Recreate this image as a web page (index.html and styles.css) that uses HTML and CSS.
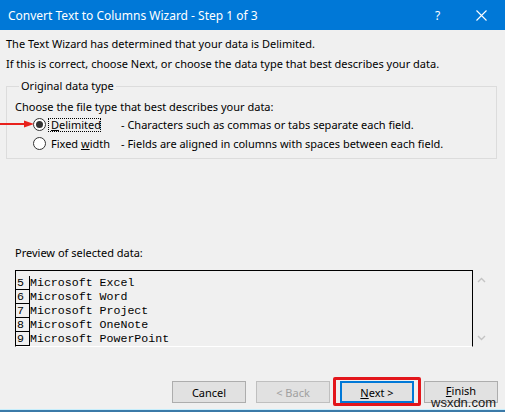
FILE: index.html
```html
<!doctype html>
<html lang="en">
<head>
  <meta charset="utf-8">
  <title>Convert Text to Columns Wizard - Step 1 of 3</title>
  <link rel="stylesheet" href="styles.css">
</head>
<body>
  <div class="window">
    <div class="titlebar">
      <span class="title">Convert Text to Columns Wizard - Step 1 of 3</span>
      <span class="help">?</span>
      <span class="close">
        <svg width="11" height="11" viewBox="0 0 11 11"><path d="M0.5 0.5 L10.5 10.5 M10.5 0.5 L0.5 10.5" stroke="#fff" stroke-width="1.1" fill="none"/></svg>
      </span>
    </div>

    <div class="content">
      <p class="intro">The Text Wizard has determined that your data is Delimited.</p>
      <p class="intro">If this is correct, choose Next, or choose the data type that best describes your data.</p>

      <fieldset class="group">
        <legend>Original data type</legend>
        <p class="hint">Choose the file type that best describes your data:</p>
        <div class="option">
          <svg class="pointer" width="34" height="8" viewBox="0 0 34 8"><path d="M0 4 H26" stroke="#e8211c" stroke-width="2"/><path d="M24 0.5 L34 4 L24 7.5 Z" fill="#e8211c"/></svg>
          <span class="radio checked"></span>
          <span class="label focused"><u>D</u>elimited</span>
          <span class="desc">- Characters such as commas or tabs separate each field.</span>
        </div>
        <div class="option">
          <span class="radio"></span>
          <span class="label">Fixed <u>w</u>idth</span>
          <span class="desc">- Fields are aligned in columns with spaces between each field.</span>
        </div>
      </fieldset>

      <p class="preview-title">Preview of selected data:</p>
      <div class="preview-wrap">
        <div class="preview">
          <div class="row"><span class="num">5</span><span class="cell">Microsoft Excel</span></div>
          <div class="row"><span class="num">6</span><span class="cell">Microsoft Word</span></div>
          <div class="row"><span class="num">7</span><span class="cell">Microsoft Project</span></div>
          <div class="row"><span class="num">8</span><span class="cell">Microsoft OneNote</span></div>
          <div class="row"><span class="num">9</span><span class="cell">Microsoft PowerPoint</span></div>
        </div>
        <div class="scroll">
          <svg width="9" height="6" viewBox="0 0 9 6"><path d="M1 5 L4.5 1.5 L8 5" stroke="#c4c4c4" stroke-width="1.4" fill="none"/></svg>
          <svg width="9" height="6" viewBox="0 0 9 6"><path d="M1 1 L4.5 4.5 L8 1" stroke="#c4c4c4" stroke-width="1.4" fill="none"/></svg>
        </div>
      </div>
    </div>

    <div class="buttons">
      <button class="btn">Cancel</button>
      <button class="btn" disabled>&lt; Back</button>
      <button class="btn default marked"><u>N</u>ext &gt;</button>
      <button class="btn finish"><span class="finish-label"><u>F</u>inish</span><span class="stamp">wsxdn.com</span></button>
    </div>
    <div class="frame-edge"></div>
  </div>
</body>
</html>
```

FILE: styles.css
```css
* {
  margin: 0;
  padding: 0;
  box-sizing: border-box;
}

body {
  font-family: "Noto Sans", "Open Sans", sans-serif;
  font-size: 11px;
  color: #000;
  background: #f0f0f0;
}

.window {
  width: 505px;
  height: 412px;
  display: flex;
  flex-direction: column;
  background: #f0f0f0;
}

/* title bar */
.titlebar {
  height: 30px;
  background: #0078d7;
  color: #fff;
  display: flex;
  align-items: center;
  padding-left: 8px;
  font-size: 12px;
}

.title {
  flex: 1;
}

.help {
  width: 10px;
  margin-right: 31px;
  font-size: 12px;
}

.close {
  display: flex;
  margin-right: 18px;
}

/* body */
.content {
  padding: 4px 0 0 6px;
  flex: 1;
}

.intro {
  line-height: 20px;
}

.group {
  margin: 4px 8px 0 0;
  border: 1px solid #dcdcdc;
  padding: 5px 8px 5px 8px;
}

.group legend {
  padding: 0 2px;
  margin-left: 4px;
  line-height: 16px;
}

.hint {
  line-height: 16px;
}

.option {
  position: relative;
  display: flex;
  align-items: center;
  height: 19px;
}

.pointer {
  position: absolute;
  left: -15px;
  top: 5px;
}

.radio {
  width: 13px;
  height: 13px;
  border: 1px solid #333;
  border-radius: 50%;
  background: #fff;
  margin-left: 18px;
  display: flex;
  align-items: center;
  justify-content: center;
}

.radio.checked::after {
  content: "";
  width: 7px;
  height: 7px;
  border-radius: 50%;
  background: #333;
}

.label {
  width: 73px;
  margin-left: 2px;
  padding-left: 2px;
  line-height: 12px;
  border: 1px solid transparent;
}

.label.focused {
  width: 53px;
  margin-right: 20px;
  border: 1px dotted #000;
}

.preview-title {
  margin-top: 86px;
  margin-left: 9px;
  line-height: 16px;
}

.preview-wrap {
  display: flex;
  margin: 9px 0 0 9px;
}

.preview {
  width: 458px;
  height: 77px;
  border: 1px solid #000;
  border-bottom: 1px solid #fff;
  padding-top: 5px;
  font-family: "Liberation Mono", monospace;
  font-size: 11.6px;
}

.row {
  display: flex;
  height: 14px;
  line-height: 13px;
}

.num {
  width: 14px;
  border-right: 1px solid #000;
  border-bottom: 1px solid #000;
  padding-left: 1px;
}

.scroll {
  width: 17px;
  display: flex;
  flex-direction: column;
  justify-content: space-between;
  align-items: center;
  padding: 7px 0 6px 0;
}

/* button row */
.buttons {
  display: flex;
  justify-content: flex-end;
  gap: 10px;
  padding-right: 7px;
  margin-bottom: 6px;
}

.btn {
  position: relative;
  width: 74px;
  height: 22px;
  background: #e1e1e1;
  border: 1px solid #adadad;
  font-family: "Noto Sans", "Open Sans", sans-serif;
  font-size: 11px;
  color: #000;
}

.btn:disabled {
  color: #a0a0a0;
  background: #e1e1e1;
  border-color: #bfbfbf;
}

.btn.default {
  border: 2px solid #0078d7;
}

.btn.marked::after {
  content: "";
  position: absolute;
  top: -6px;
  bottom: -5px;
  left: -9px;
  right: -9px;
  border: 3px solid #e3161b;
  border-radius: 2px;
}

.finish-label {
  position: relative;
  top: -2px;
}

.stamp {
  position: absolute;
  left: 6px;
  top: 15px;
  line-height: 12px;
  font-family: "Liberation Sans", sans-serif;
  font-size: 13px;
  color: #1a1a1a;
}

.frame-edge {
  height: 3px;
  border-top: 1px solid #c6eefc;
  background: #3b7aa8;
}
```
